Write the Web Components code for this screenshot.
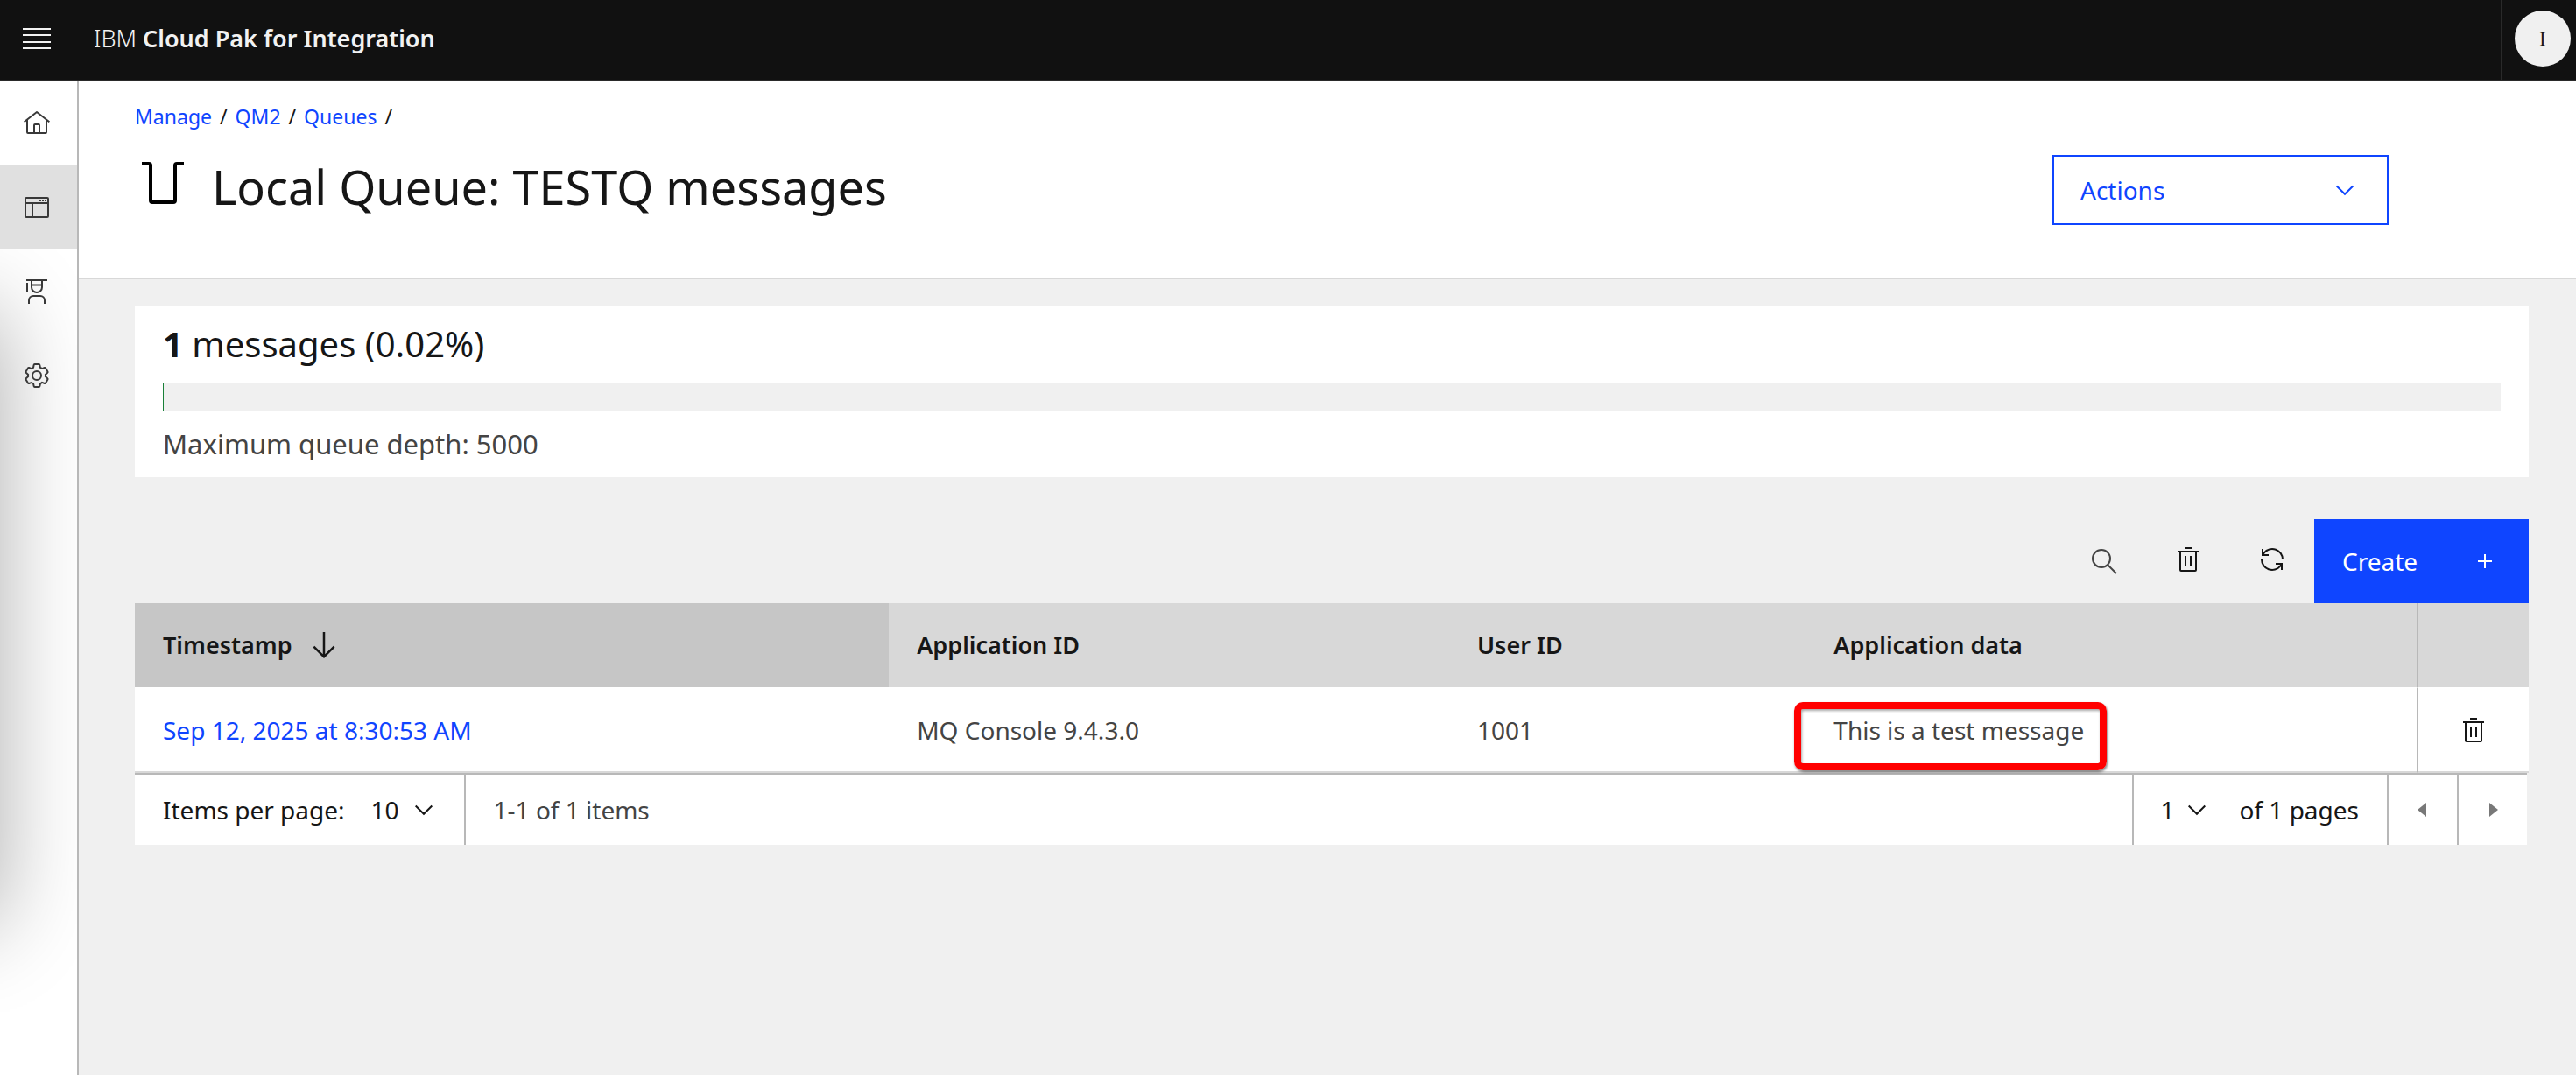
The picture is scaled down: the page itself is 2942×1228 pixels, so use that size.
<!DOCTYPE html>
<html lang="en">
<head>
<meta charset="utf-8">
<title>Local Queue: TESTQ messages</title>
<style>
  html, body { height: 100%; margin: 0; }
  body {
    --ink: #161616; --muted: #444; --blue: #0f45ff; --line: #b8b8b8; --soft: #d8d8d8; --page: #f0f0f0;
    font-family: "Noto Sans", "Open Sans", sans-serif;
    font-size: 28px; line-height: 36px; color: var(--ink); background: var(--page);
  }
</style>
</head>
<body>
<mq-app>
  <mq-header slot="header" initial="I">IBM <b>Cloud Pak for Integration</b></mq-header>
  <mq-sidebar slot="sidebar"></mq-sidebar>
  <mq-page-header heading="Local Queue: TESTQ messages">
    <a slot="crumb" href="#manage">Manage</a>
    <a slot="crumb" href="#qm2">QM2</a>
    <a slot="crumb" href="#queues">Queues</a>
  </mq-page-header>
  <mq-content>
    <mq-depth count="1" max="5000"></mq-depth>
    <mq-messages></mq-messages>
  </mq-content>
</mq-app>

<script>
const base = `<style>
  :host, *, *::before, *::after { box-sizing: border-box; }
  button, select { font: inherit; color: inherit; background: none; border: 0; border-radius: 0; margin: 0; padding: 0; cursor: pointer; }
  a { color: var(--blue); text-decoration: none; }
</style>`;

function define(name, markup) {
  customElements.define(name, class extends HTMLElement {
    constructor() {
      super();
      this.attachShadow({ mode: 'open' });
    }
    connectedCallback() {
      this.shadowRoot.innerHTML = base + (typeof markup === 'function' ? markup(this) : markup);
    }
  });
}

const icons = {
  menu: '<path d="M0 4h32v2H0zM0 11h32v2H0zM0 19h32v2H0zM0 26h32v2H0z"/>',
  home: '<path d="M16.61 2.21a1.01 1.01 0 0 0-1.24 0L1 13.42l1.24 1.57L4 13.62V26a2 2 0 0 0 2 2h20a2 2 0 0 0 2-2V13.63L29.76 15 31 13.43zM18 26h-4v-8h4zm2 0v-8a2 2 0 0 0-2-2h-4a2 2 0 0 0-2 2v8H6V12.06l10-7.79 10 7.8V26z"/>',
  dashboard: '<rect x="3" y="5" width="26" height="22" rx="1" fill="none" stroke="currentColor" stroke-width="2"/><path d="M3 10h26v2H3zM10 11h2v16h-2zM19 7h2v2h-2zM22 7h2v2h-2zM25 7h2v2h-2z"/>',
  agent: '<path d="M4 2h24v2H4zM4 6h2v10H4z"/><path d="M10 3v8a6 6 0 0 0 12 0V3M10 8.5h12M7 30v-4a5 5 0 0 1 5-5h8a5 5 0 0 1 5 5v4" fill="none" stroke="currentColor" stroke-width="2"/>',
  settings: '<path fill-rule="evenodd" d="M27,16.76c0-.25,0-.5,0-.76s0-.51,0-.77l1.92-1.68A2,2,0,0,0,29.3,11L26.94,7a2,2,0,0,0-1.73-1,2,2,0,0,0-.64.1l-2.43.82a11.35,11.35,0,0,0-1.31-.75l-.51-2.52a2,2,0,0,0-2-1.61H13.64a2,2,0,0,0-2,1.61l-.51,2.52a11.48,11.48,0,0,0-1.32.75L7.43,6.06A2,2,0,0,0,6.79,6,2,2,0,0,0,5.06,7L2.7,11a2,2,0,0,0,.41,2.51L5,15.24c0,.25,0,.5,0,.76s0,.51,0,.77L3.11,18.45A2,2,0,0,0,2.7,21L5.06,25a2,2,0,0,0,1.73,1,2,2,0,0,0,.64-.1l2.43-.82a11.35,11.35,0,0,0,1.31.75l.51,2.52a2,2,0,0,0,2,1.61h4.72a2,2,0,0,0,2-1.61l.51-2.52a11.48,11.48,0,0,0,1.32-.75l2.42.82a2,2,0,0,0,.64.1,2,2,0,0,0,1.73-1L29.3,21a2,2,0,0,0-.41-2.51ZM25.21,24l-3.43-1.16a8.86,8.86,0,0,1-2.71,1.57L18.36,28H13.64l-.71-3.55a9.36,9.36,0,0,1-2.7-1.57L6.79,24,4.43,20l2.72-2.4a8.9,8.9,0,0,1,0-3.13L4.43,12,6.79,8l3.43,1.16a8.86,8.86,0,0,1,2.71-1.57L13.64,4h4.72l.71,3.55a9.36,9.36,0,0,1,2.7,1.57L25.21,8,27.57,12l-2.72,2.4a8.9,8.9,0,0,1,0,3.13L27.57,20Z"/><circle cx="16" cy="16" r="5" fill="none" stroke="currentColor" stroke-width="2"/>',
  queue: '<path d="M4 5h4a1 1 0 0 1 1 1v20a1 1 0 0 0 1 1h12a1 1 0 0 0 1-1V6a1 1 0 0 1 1-1h4" fill="none" stroke="currentColor" stroke-width="2"/>',
  chevron: '<path d="M6.7 11.5 16 20.8l9.3-9.3" fill="none" stroke="currentColor" stroke-width="2"/>',
  search: '<path d="M20 20l10 10" stroke="currentColor" stroke-width="2"/><circle cx="13" cy="13" r="10" fill="none" stroke="currentColor" stroke-width="2"/>',
  trash: '<path d="M12 12h2v12h-2zM18 12h2v12h-2zM12 2h8v2h-8zM4 6v2h2v20a2 2 0 0 0 2 2h16a2 2 0 0 0 2-2V8h2V6zM8 28V8h16v20z"/>',
  renew: '<path d="M12 10H6.78A11 11 0 0 1 27 16h2A13 13 0 0 0 6 7.68V4H4v8h8zM20 22h5.22A11 11 0 0 1 5 16H3a13 13 0 0 0 23 8.32V28h2v-8h-8z"/>',
  add: '<path d="M17 15V8h-2v7H8v2h7v7h2v-7h7v-2z"/>',
  down: '<path d="M24.59 16.59 17 24.17V4h-2v20.17L7.41 16.59 6 18l10 10 10-10z"/>',
  prev: '<path d="M20 24 10 16l10-8z"/>',
  next: '<path d="M12 8l10 8-10 8z"/>'
};

define('mq-icon', el => `<style>
  :host { display: block; flex: none; width: 32px; height: 32px; }
  svg { display: block; width: 100%; height: 100%; fill: currentColor; }
</style><svg viewBox="0 0 32 32" aria-hidden="true">${icons[el.getAttribute('name')]}</svg>`);

define('mq-app', `<style>
  :host { display: flex; flex-direction: column; min-height: 100%; }
  .body { display: flex; flex: 1; }
  main { flex: 1; min-width: 0; }
</style>
<slot name="header"></slot>
<div class="body"><slot name="sidebar"></slot><main><slot></slot></main></div>`);

define('mq-header', el => `<style>
  :host { display: flex; align-items: stretch; height: 93px; padding-left: 26px; background: #111; color: #f2f2f2; border-bottom: 2px solid #2a2a2a; }
  .menu, .user { padding-bottom: 3px; display: flex; align-items: center; }
  .name { flex: 1; padding: 0 0 3px 49px; display: flex; align-items: center; font-size: 27px; }
  .name span { font-weight: 300; }
  ::slotted(b) { font-weight: 600; }
  .user { padding-left: 14px; padding-right: 6px; border-left: 2px solid #2a2a2a; }
  .avatar { display: grid; place-items: center; width: 64px; height: 64px; border-radius: 50%; background: var(--page); color: var(--ink); font-size: 23px; }
</style>
<button class="menu" aria-label="Open menu"><mq-icon name="menu"></mq-icon></button>
<div class="name"><span><slot></slot></span></div>
<button class="user" aria-label="Account"><span class="avatar">${el.getAttribute('initial')}</span></button>`);

define('mq-sidebar', `<style>
  :host { display: block; position: relative; overflow: hidden; flex: none; width: 90px; background: #fff; border-right: 2px solid var(--line); color: #393939; }
  :host::before { content: ""; position: absolute; left: -400px; top: 262px; width: 400px; height: 700px; box-shadow: 0 0 100px rgba(0,0,0,.32); }
  nav { position: relative; display: flex; flex-direction: column; }
  a { color: inherit; display: flex; align-items: center; height: 96px; padding-left: 26px; }
  a[aria-current] { background: #e0e0e0; }
</style>
<nav aria-label="Main">
  <a href="#home" aria-label="Home"><mq-icon name="home"></mq-icon></a>
  <a href="#manage" aria-label="Manage" aria-current="page"><mq-icon name="dashboard"></mq-icon></a>
  <a href="#learn" aria-label="Learning"><mq-icon name="agent"></mq-icon></a>
  <a href="#settings" aria-label="Settings"><mq-icon name="settings"></mq-icon></a>
</nav>`);

define('mq-page-header', el => `<style>
  :host { display: block; background: #fff; padding: 24px 214px 60px 64px; border-bottom: 2px solid var(--soft); }
  nav { display: flex; gap: 9px; font-size: 23px; line-height: 32px; margin-bottom: 28px; }
  ::slotted(a) { color: var(--blue); text-decoration: none; }
  ::slotted(a)::after { content: "/"; color: var(--ink); margin-left: 9px; }
  .row { display: flex; justify-content: space-between; align-items: flex-start; }
  .title { display: flex; gap: 24px; }
  .title mq-icon { width: 64px; height: 64px; color: #000; }
  h1 { margin: 0; font-size: 54px; line-height: 72px; font-weight: 400; }
  .actions { display: flex; justify-content: space-between; align-items: center; width: 384px; height: 80px; padding: 0 32px 0 30px; border: 2px solid var(--blue); color: var(--blue); }
</style>
<nav aria-label="Breadcrumb"><slot name="crumb"></slot></nav>
<div class="row">
  <div class="title"><mq-icon name="queue"></mq-icon><h1>${el.getAttribute('heading')}</h1></div>
  <button class="actions">Actions<mq-icon name="chevron"></mq-icon></button>
</div>`);

define('mq-content', `<style>
  :host { display: flex; flex-direction: column; gap: 48px; padding: 30px 54px 30px 64px; }
</style><slot></slot>`);

define('mq-depth', el => {
  const n = +el.getAttribute('count'), max = +el.getAttribute('max');
  const pct = (n / max * 100).toFixed(2);
  return `<style>
  :host { display: flex; flex-direction: column; gap: 16px; background: #fff; padding: 16px 32px; }
  p { margin: 0; }
  .count { font-size: 40px; line-height: 56px; }
  .bar { height: 32px; background: var(--page); }
  .fill { height: 100%; width: 1px; background: #198038; }
  .max { font-size: 31px; line-height: 44px; color: var(--muted); }
</style>
<p class="count"><b>${n}</b> messages (${pct}%)</p>
<div class="bar" role="meter" aria-label="Queue depth" aria-valuenow="${n}" aria-valuemax="${max}"><div class="fill"></div></div>
<p class="max">Maximum queue depth: ${max}</p>`;
});

define('mq-messages', `<style>
  :host { display: block; }
  .tools { display: flex; justify-content: flex-end; height: 96px; }
  .tools button { display: flex; align-items: center; justify-content: center; width: 96px; }
  .tools .search { color: var(--muted); }
  .tools .raised { padding-bottom: 4px; }
  .tools .create { width: 245px; padding: 0 34px 0 32px; justify-content: space-between; background: var(--blue); color: #fff; }
  table { width: 100%; table-layout: fixed; border-collapse: separate; border-spacing: 0; text-align: left; }
  col.time { width: 31.5%; } col.app { width: 23.4%; } col.user { width: 14.9%; } col.act { width: 128px; }
  th { height: 96px; padding: 0 32px; background: var(--soft); font-size: 27px; font-weight: 600; }
  th.sorted { background: #c6c6c6; }
  th.sorted button { display: flex; align-items: center; gap: 16px; font-weight: 600; }
  th.sorted mq-icon { width: 40px; height: 40px; }
  td { height: 98px; padding: 0 32px; background: #fff; color: var(--muted); border-top: 2px solid #fff; border-bottom: 2px solid var(--soft); }
  th:last-child, td:last-child { padding: 0; border-left: 2px solid var(--line); }
  td button { display: flex; justify-content: center; align-items: center; width: 100%; height: 92px; color: var(--ink); }
  .mark { position: relative; }
  .mark::after { content: ""; position: absolute; inset: -13px -26px -27px -45px; border: 8px solid #f00; border-radius: 10px; box-shadow: 1px 2px 3px rgba(0,0,0,.5), inset 1px 2px 3px rgba(0,0,0,.35); pointer-events: none; }
</style>
<div class="tools">
  <button class="search" aria-label="Search"><mq-icon name="search"></mq-icon></button>
  <button class="raised" aria-label="Delete messages"><mq-icon name="trash"></mq-icon></button>
  <button class="raised" aria-label="Refresh"><mq-icon name="renew"></mq-icon></button>
  <button class="create">Create<mq-icon name="add"></mq-icon></button>
</div>
<table>
  <colgroup><col class="time"><col class="app"><col class="user"><col><col class="act"></colgroup>
  <thead><tr>
    <th class="sorted" aria-sort="descending"><button>Timestamp<mq-icon name="down"></mq-icon></button></th>
    <th>Application ID</th><th>User ID</th><th>Application data</th><th></th>
  </tr></thead>
  <tbody><tr>
    <td><a href="#message">Sep 12, 2025 at 8:30:53 AM</a></td>
    <td>MQ Console 9.4.3.0</td><td>1001</td>
    <td><span class="mark">This is a test message</span></td>
    <td><button aria-label="Delete message"><mq-icon name="trash"></mq-icon></button></td>
  </tr></tbody>
</table>
<mq-pagination></mq-pagination>`);

define('mq-pagination', `<style>
  :host { display: flex; height: 82px; margin-right: 2px; background: #fff; border-top: 2px solid var(--line); }
  .group { display: flex; align-items: center; }
  .size { padding-left: 32px; border-right: 2px solid var(--line); }
  .range { flex: 1; padding-left: 32px; color: var(--muted); }
  .page { border-left: 2px solid var(--line); padding-right: 32px; }
  .select { display: grid; align-self: stretch; align-items: center; }
  .select > * { grid-area: 1 / 1; }
  .select mq-icon { justify-self: end; pointer-events: none; }
  select { appearance: none; height: 100%; padding-left: 30px; }
  .size .select { width: 136px; padding-right: 30px; }
  .page .select { width: 88px; margin-right: 32px; }
  .nav { width: 80px; border-left: 2px solid var(--line); color: #787878; display: flex; align-items: center; justify-content: center; }
</style>
<div class="group size"><label for="size">Items per page:</label>
  <span class="select"><select id="size"><option>10</option><option>20</option><option>50</option></select><mq-icon name="chevron"></mq-icon></span></div>
<div class="group range">1-1 of 1 items</div>
<div class="group page">
  <span class="select"><select id="page"><option>1</option></select><mq-icon name="chevron"></mq-icon></span>
  <label for="page">of 1 pages</label></div>
<button class="nav" aria-label="Previous page"><mq-icon name="prev"></mq-icon></button>
<button class="nav" aria-label="Next page"><mq-icon name="next"></mq-icon></button>`);
</script>
</body>
</html>
